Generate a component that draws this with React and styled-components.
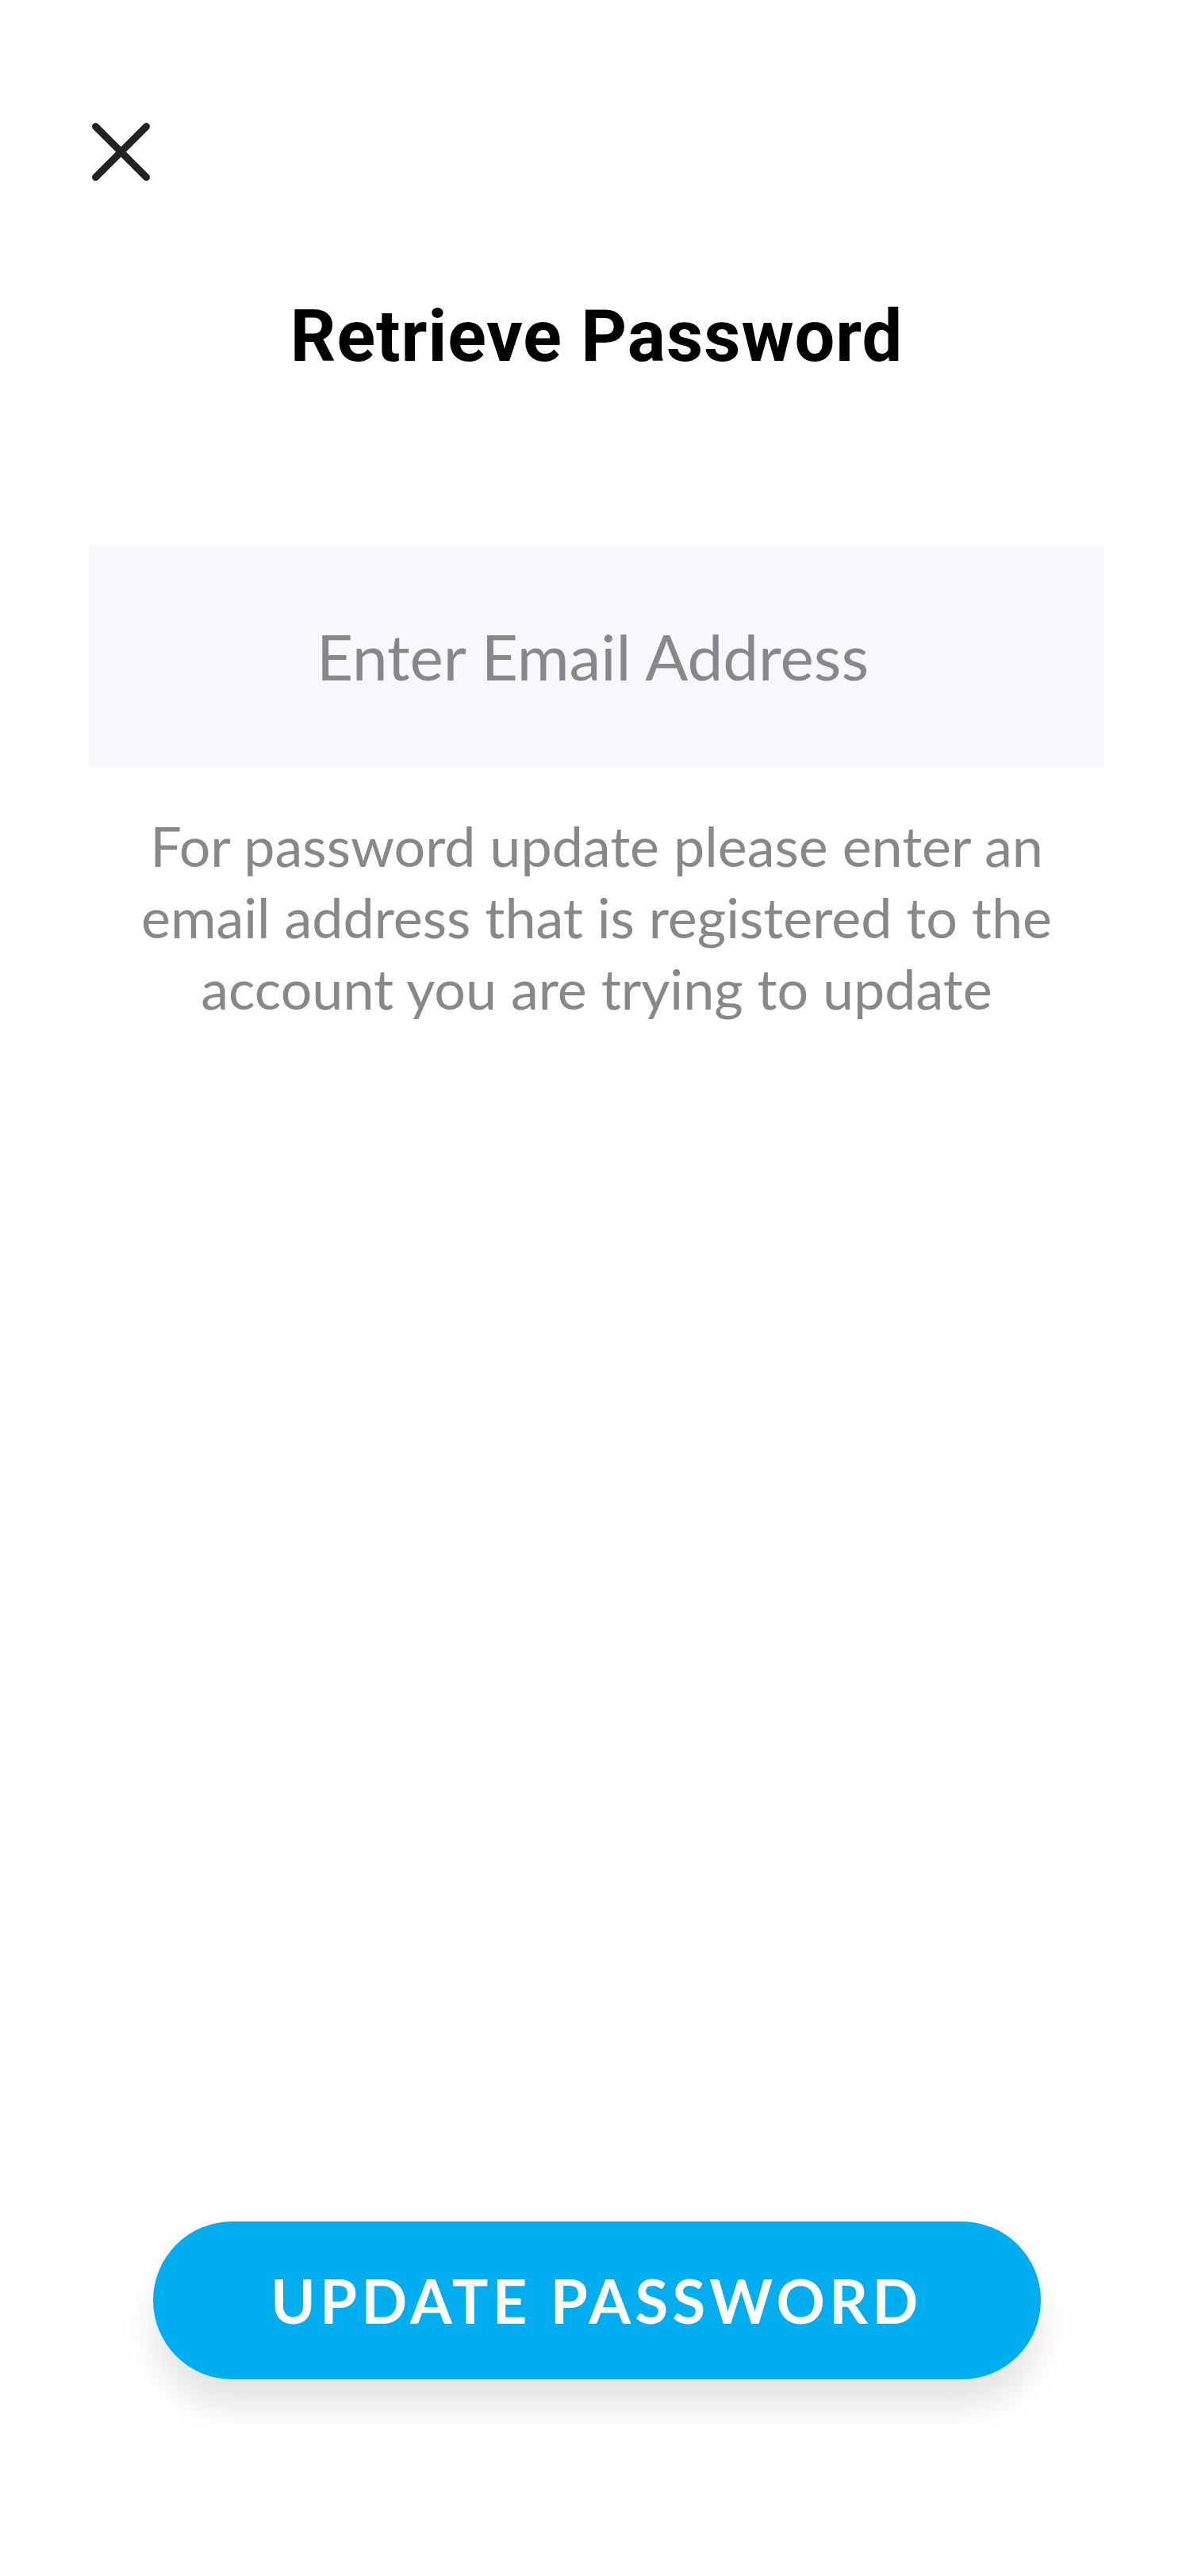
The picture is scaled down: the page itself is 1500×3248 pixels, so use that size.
import styled, { createGlobalStyle } from "styled-components";

const GlobalStyle = createGlobalStyle`
  html, body {
    margin: 0;
    padding: 0;
    background: #ffffff;
  }
  * {
    box-sizing: border-box;
  }
`;

export default function App() {
  return (
    <Screen>
      <GlobalStyle />
      <TopBar>
        <CloseButton aria-label="Close">
          <svg width="82" height="82" viewBox="0 0 82 82">
            <path
              d="M8.5 8.5 L72.5 72.5 M72.5 8.5 L8.5 72.5"
              stroke="#222222"
              strokeWidth="9"
              strokeLinecap="round"
              fill="none"
            />
          </svg>
        </CloseButton>
      </TopBar>

      <Title>Retrieve Password</Title>

      <EmailInput type="email" placeholder="Enter Email Address" />

      <HelpText>
        For password update please enter an email address that is registered
        to the account you are trying to update
      </HelpText>

      <Footer>
        <UpdateButton>UPDATE PASSWORD</UpdateButton>
      </Footer>
    </Screen>
  );
}

const Screen = styled.div`
  display: flex;
  flex-direction: column;
  align-items: center;
  min-height: 100vh;
  width: 100%;
  padding: 151px 108px 248px 112px;
  background: #ffffff;
`;

const TopBar = styled.div`
  display: flex;
  align-self: stretch;
  height: 82px;
`;

const CloseButton = styled.button`
  display: flex;
  padding: 0;
  margin: 0;
  border: none;
  background: none;
  cursor: pointer;
`;

const Title = styled.h1`
  margin: 142px 0 0;
  font-family: Roboto, "Liberation Sans", sans-serif;
  font-weight: 700;
  font-size: 90px;
  line-height: 100px;
  letter-spacing: 1px;
  color: #000000;
  text-align: center;
`;

const EmailInput = styled.input`
  align-self: stretch;
  margin-top: 213px;
  height: 278px;
  padding: 0 10px 0 0;
  border: none;
  outline: none;
  background: #f7f8fd;
  font-family: Lato, "Liberation Sans", sans-serif;
  font-size: 80px;
  color: #333333;
  text-align: center;

  &::placeholder {
    color: #888888;
  }
`;

const HelpText = styled.p`
  margin: 55px 0 0;
  max-width: 1190px;
  font-family: Lato, "Liberation Sans", sans-serif;
  font-size: 70px;
  line-height: 90px;
  color: #888888;
  text-align: center;
`;

const Footer = styled.div`
  display: flex;
  justify-content: center;
  margin-top: auto;
`;

const UpdateButton = styled.button`
  width: 1119px;
  height: 199px;
  border: none;
  border-radius: 100px;
  background: #00aeef;
  box-shadow: 0 34px 44px rgba(0, 0, 0, 0.11);
  font-family: Lato, "Liberation Sans", sans-serif;
  font-weight: 700;
  font-size: 76px;
  letter-spacing: 5.4px;
  color: #ffffff;
  cursor: pointer;
`;
